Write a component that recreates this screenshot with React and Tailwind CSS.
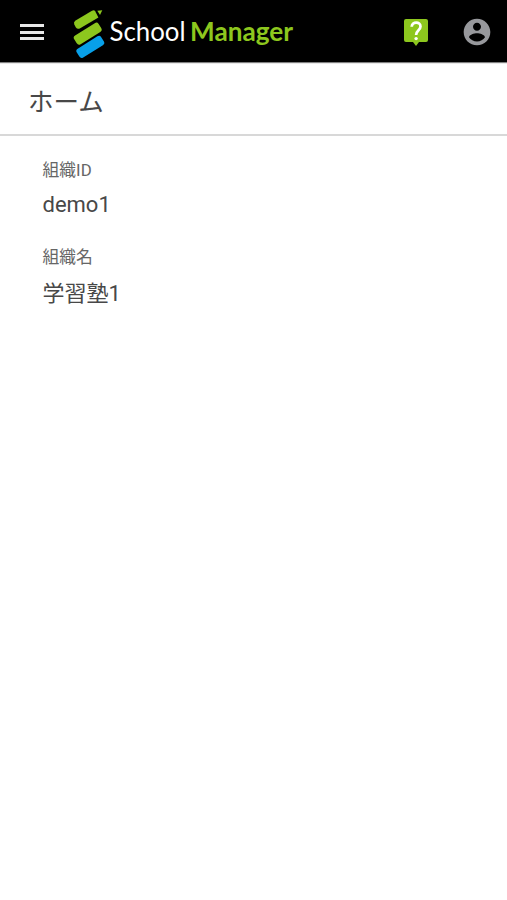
function Logo() {
  return (
    <svg className="ml-[26px] h-[62px] w-[226px]" viewBox="70 0 226 62" role="img" aria-label="School Manager">
      <g fill="#8dc71e">
        <path d="M75.200 20.800L92 10.800Q94.200 9.600 95.200 11.200L98.400 17.400L79.800 28.400Q77.300 29.600 75.900 27.400L74.300 24.600Q73.300 22.200 75.200 20.800Z" />
        <path d="M97.300 10.800L102.300 10.300L100 14.900Z" />
        <rect x="-14.400" y="-5.200" width="28.800" height="10.400" rx="2.800" transform="translate(87.700 33.700) rotate(-32)" />
      </g>
      <rect x="-14.400" y="-5.200" width="28.800" height="10.400" rx="2.800" fill="#08a0e9" transform="translate(90.300 46.900) rotate(-32)" />
      <text x="109.500" y="40.700" textLength="76" lengthAdjust="spacingAndGlyphs" fill="#fff" className="font-['Lato',sans-serif] text-[26px] font-normal">School</text>
      <text x="190" y="40.700" textLength="103" lengthAdjust="spacingAndGlyphs" fill="#8dc71e" className="font-['Lato',sans-serif] text-[26px] font-bold">Manager</text>
    </svg>
  );
}

function Field({ label, value, className, valueClassName }) {
  return (
    <div className={className}>
      <dt className="h-6 text-[16.800px] leading-6 text-[#666]">{label}</dt>
      <dd className={`h-8 text-[22px] leading-8 text-[#484848] ${valueClassName}`}>{value}</dd>
    </div>
  );
}

export default function App() {
  return (
    <div className="min-h-[900px] w-full bg-white font-['Roboto','Noto_Sans_CJK_JP',sans-serif]">
      <header className="flex h-[63px] items-start border-b border-[#808080] bg-black pl-5 shadow-[0_1px_0_#e8e8e8]">
        <button aria-label="メニュー" className="mt-6 flex h-4 w-6 flex-col justify-between">
          <span className="h-[3px] w-full bg-[#e8e8e8]" />
          <span className="h-[3px] w-full bg-[#e8e8e8]" />
          <span className="h-[3px] w-full bg-[#e8e8e8]" />
        </button>
        <Logo />
        <div className="ml-auto flex pr-[14px]">
          <svg className="mt-[18px] h-[29px] w-[26px]" viewBox="0 0 26 29" fill="none">
            <path d="M3 1H23Q25 1 25 3V22Q25 24 23 24H16L13 28L10 24H3Q1 24 1 22V3Q1 1 3 1Z" fill="#8dc71e" />
            <path d="M8.700 8.800C9 3.200 17.500 3.200 17.500 8.600C17.500 12.300 13.100 12.300 13.100 17" stroke="#fff" strokeWidth="2.700" />
            <circle cx="13.100" cy="20.600" r="1.700" fill="#fff" />
          </svg>
          <svg className="ml-8 mt-4 h-8 w-8" viewBox="0 0 24 24" fill="#97989c">
            <path d="M12 2C6.480 2 2 6.480 2 12s4.480 10 10 10 10-4.480 10-10S17.520 2 12 2zm0 3c1.660 0 3 1.340 3 3s-1.340 3-3 3-3-1.340-3-3 1.340-3 3-3zm0 14.200c-2.500 0-4.710-1.280-6-3.220.03-1.990 4-3.080 6-3.080 1.990 0 5.970 1.090 6 3.080-1.290 1.940-3.500 3.220-6 3.220z" />
          </svg>
        </div>
      </header>
      <div className="flex h-[73px] items-center border-b-2 border-[#d8d8d8] pl-7">
        <h1 className="pt-1.5 text-[25.500px] leading-9 text-[#484848]">ホーム</h1>
      </div>
      <dl className="pl-[42.500px] pt-[22px]">
        <Field label="組織ID" value="demo1" valueClassName="mt-[7px]" />
        <Field label="組織名" value="学習塾1" className="mt-6" valueClassName="mt-[9px]" />
      </dl>
    </div>
  );
}
